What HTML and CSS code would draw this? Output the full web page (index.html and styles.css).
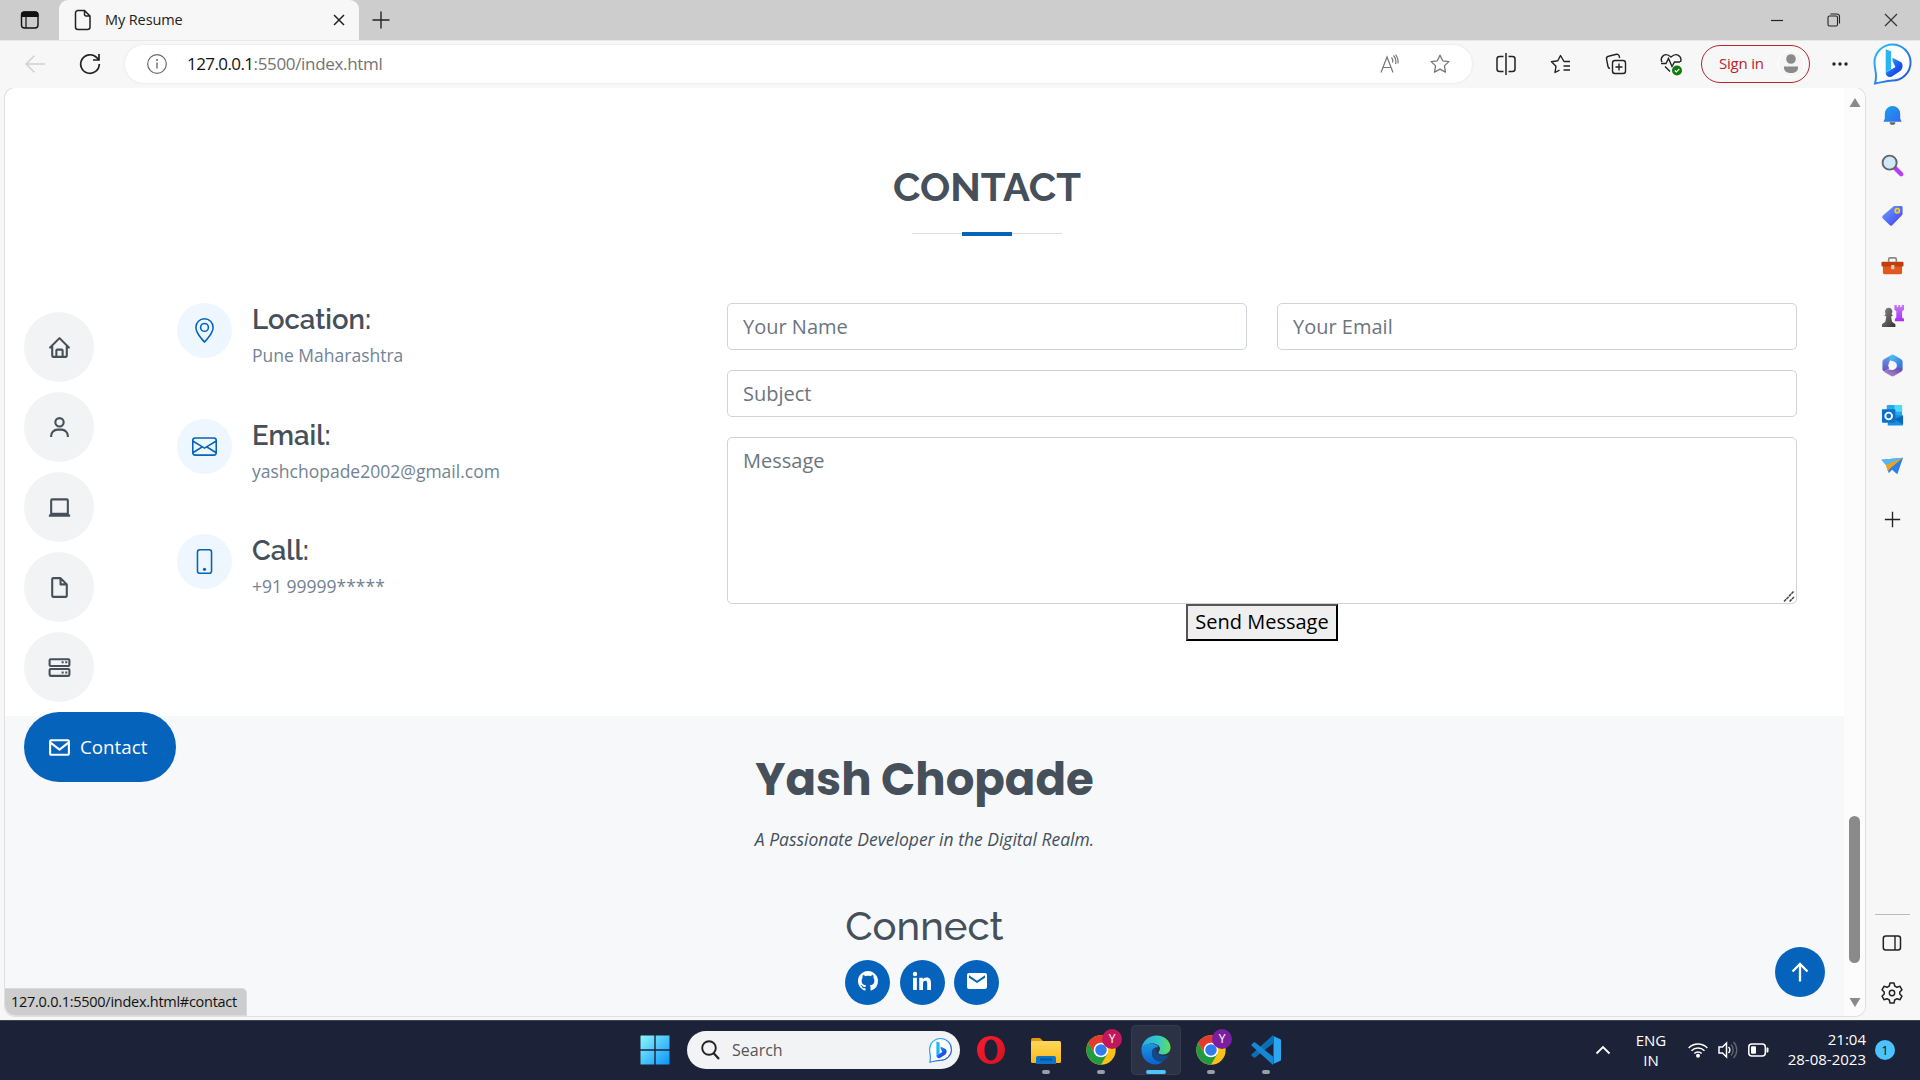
FILE: index.html
```html
<!DOCTYPE html>
<html lang="en">
<head>
<meta charset="utf-8">
<title>My Resume</title>
<link rel="stylesheet" href="styles.css">
</head>
<body>
<svg class="defs" width="0" height="0" aria-hidden="true">
  <defs>
    <linearGradient id="gBing" x1="0" y1="0" x2="1" y2="1"><stop offset="0" stop-color="#25c5f5"/><stop offset=".5" stop-color="#2b86ee"/><stop offset="1" stop-color="#1c4fd6"/></linearGradient>
    <linearGradient id="gB" x1="0" y1="0" x2="1" y2="1"><stop offset="0" stop-color="#2fd0f5"/><stop offset=".45" stop-color="#1a6ff0"/><stop offset=".7" stop-color="#1b48ef"/><stop offset="1" stop-color="#4fd8f0"/></linearGradient>
    <linearGradient id="gWin" x1="0" y1="0" x2="1" y2="1"><stop offset="0" stop-color="#8df6fb"/><stop offset="1" stop-color="#0a94fa"/></linearGradient>
    <linearGradient id="gBell" x1="0" y1="0" x2="1" y2="1"><stop offset="0" stop-color="#1aa4e6"/><stop offset="1" stop-color="#3466f5"/></linearGradient>
    <linearGradient id="gTag" x1="0" y1="0" x2="1" y2="1"><stop offset="0" stop-color="#6aa6fb"/><stop offset="1" stop-color="#4338f2"/></linearGradient>
    <linearGradient id="gPurple" x1="0" y1="0" x2="0" y2="1"><stop offset="0" stop-color="#c878fb"/><stop offset="1" stop-color="#a52ef5"/></linearGradient>
    <linearGradient id="gPawn" x1="0" y1="0" x2="1" y2="1"><stop offset="0" stop-color="#8a8a8a"/><stop offset="1" stop-color="#333"/></linearGradient>
    <linearGradient id="gFolder" x1="0" y1="0" x2="0" y2="1"><stop offset="0" stop-color="#ffd75e"/><stop offset="1" stop-color="#f9b915"/></linearGradient>
    <linearGradient id="gEdgeTop" x1="0" y1="0" x2="1" y2="0"><stop offset="0" stop-color="#2ba9ea"/><stop offset=".6" stop-color="#35c9c8"/><stop offset="1" stop-color="#62e04c"/></linearGradient>
    <linearGradient id="gEdge" x1="0" y1="0" x2="0" y2="1"><stop offset="0" stop-color="#1c97df"/><stop offset="1" stop-color="#0b62cf"/></linearGradient>
    <linearGradient id="gOpera" x1="0" y1="0" x2="1" y2="1"><stop offset="0" stop-color="#ff1b2d"/><stop offset="1" stop-color="#d01323"/></linearGradient>
    <linearGradient id="gM1" x1="0" y1="0" x2="0" y2="1"><stop offset="0" stop-color="#58a6f2"/><stop offset="1" stop-color="#6d4fc0"/></linearGradient>
    <linearGradient id="gM2" x1="0" y1="0" x2="1" y2="1"><stop offset="0" stop-color="#4ccbf0"/><stop offset="1" stop-color="#3a5ce0"/></linearGradient>
    <linearGradient id="gM3" x1="0" y1="1" x2="1" y2="0"><stop offset="0" stop-color="#b98ad0"/><stop offset="1" stop-color="#5a47b0"/></linearGradient>
    <symbol id="bing" viewBox="0 0 40 44">
      <path d="M2 42.5C5 33 1.5 29 1.5 21A18.5 18.5 0 1 1 20 39.500c-7 0-11 2-18 3z" fill="#fff" stroke="url(#gBing)" stroke-width="2"/>
      <path d="M13 7.500l5.500 2v18.500l-5.500 3.500z" fill="#27b5f3"/>
      <path d="M20 16l8.500 4.500c2.500 1.500 2.500 6.500 0 9L19 35.500c-3 1.500-6-1-6-4l10-6-3-6z" fill="url(#gB)"/>
    </symbol>
    <symbol id="chrome" viewBox="0 0 48 48">
      <circle cx="24" cy="24" r="23.500" fill="#fbc116"/>
      <path d="M3.650 12.250A23.500 23.500 0 0 1 44.350 12.250H24L14 30z" fill="#e33b2e"/>
      <path d="M3.650 12.250A23.500 23.500 0 0 0 24 47.500l10.200-17.600H13.800z" fill="#229a44"/>
      <circle cx="24" cy="24" r="11.700" fill="#fff"/><circle cx="24" cy="24" r="9.200" fill="#2f7bef"/>
    </symbol>
  </defs>
</svg>

<header class="titlebar">
  <div class="tab-actions">
    <svg width="20" height="20" viewBox="0 0 20 20"><rect x="1.500" y="2" width="16.500" height="16" rx="3" fill="none" stroke="#111" stroke-width="1.400"/><path d="M1 7V5a3 3 0 0 1 3-3.500h11.500a3 3 0 0 1 3 3.500v2z" fill="#111"/><path d="M6 7v11" stroke="#111" stroke-width="1.200"/></svg>
  </div>
  <div class="tab">
    <svg width="18" height="22" viewBox="0 0 18 22"><path d="M4 1.500h6.500l5.500 5.500v11a2.500 2.500 0 0 1-2.500 2.500H4A2.500 2.500 0 0 1 1.500 18V4A2.500 2.500 0 0 1 4 1.500zM10.500 1.500V5.500A1.500 1.500 0 0 0 12 7h4" fill="none" stroke="#222" stroke-width="1.500"/></svg>
    <span class="tab-title">My Resume</span>
    <svg class="tab-close" width="12" height="12" viewBox="0 0 12 12"><path d="M1 1l10 10M11 1L1 11" stroke="#222" stroke-width="1.500"/></svg>
  </div>
  <svg class="new-tab" width="18" height="18" viewBox="0 0 18 18"><path d="M9 .5v17M.5 9h17" stroke="#222" stroke-width="1.400"/></svg>
  <div class="window-buttons">
    <svg width="14" height="14" viewBox="0 0 14 14"><path d="M1 7.500h12" stroke="#222" stroke-width="1.200"/></svg>
    <svg width="14" height="14" viewBox="0 0 14 14"><rect x="1" y="3" width="9.500" height="10" rx="1.500" fill="none" stroke="#222" stroke-width="1.100"/><path d="M3.500 1H10a2.500 2.500 0 0 1 2.500 2.500V10.500" fill="none" stroke="#222" stroke-width="1.100"/></svg>
    <svg width="14" height="14" viewBox="0 0 14 14"><path d="M1 1l12 12M13 1L1 13" stroke="#333" stroke-width="1.200"/></svg>
  </div>
</header>

<nav class="toolbar">
  <svg class="back" width="20" height="18" viewBox="0 0 20 18"><path d="M20 9H1M9.500.8L1 9l8.500 8.200" fill="none" stroke="#cfcfcf" stroke-width="1.500"/></svg>
  <svg class="reload" width="22" height="22" viewBox="0 0 22 22"><path d="M20.300 11a9.300 9.300 0 1 1-2.500-6.300L20 6.800M20 1v6h-6" fill="none" stroke="#222" stroke-width="1.700"/></svg>
  <div class="address">
    <svg width="20" height="20" viewBox="0 0 20 20"><circle cx="10" cy="10" r="9.300" fill="none" stroke="#6b6b6b" stroke-width="1.200"/><path d="M10 8.500v6" stroke="#6b6b6b" stroke-width="1.400"/><circle cx="10" cy="6" r="1" fill="#6b6b6b"/></svg>
    <span class="url"><span class="host">127.0.0.1</span>:5500/index.html</span>
    <svg class="read" width="20" height="20" viewBox="0 0 20 20"><path d="M1 18.500L7 3l6 15.500M3 13.500h8M11.500 3.500a5 5 0 0 1 1 5M13.500 1.500a9 9 0 0 1 2 8.500M15.500.5a12 12 0 0 1 2.500 9" fill="none" stroke="#777" stroke-width="1.200"/></svg>
    <svg width="20" height="20" viewBox="0 0 20 20"><path d="M10 1.200l2.700 5.600 6.200.8-4.500 4.300 1.100 6.200-5.500-3-5.500 3 1.100-6.200L1.100 7.600l6.200-.8z" fill="none" stroke="#777" stroke-width="1.300" stroke-linejoin="round"/></svg>
  </div>
  <div class="tools">
    <svg width="22" height="22" viewBox="0 0 22 22"><path d="M8.500 3.500h-4a2.500 2.500 0 0 0-2.500 2.500v10a2.500 2.500 0 0 0 2.500 2.500h4M13.500 3.500h4a2.500 2.500 0 0 1 2.500 2.500v10a2.500 2.500 0 0 1-2.500 2.500h-4M11 0v22" fill="none" stroke="#222" stroke-width="1.500"/></svg>
    <svg width="22" height="22" viewBox="0 0 22 22"><path d="M20 8.500h-6l-3.500-6-2.700 5.300-6.300.9 4.500 4.500-1 6.300 4.500-2.300M13.500 13H20M13.500 17H20" fill="none" stroke="#222" stroke-width="1.400" stroke-linejoin="round"/></svg>
    <svg width="22" height="22" viewBox="0 0 22 22"><rect x="7.500" y="7.500" width="13" height="13" rx="2.500" fill="none" stroke="#222" stroke-width="1.400"/><path d="M14 10.500v7M10.500 14h7M5 15.500A2.500 2.500 0 0 1 3 13.500L1.500 6A2.500 2.500 0 0 1 3.500 3.200L11.500 1.300A2.500 2.500 0 0 1 14.300 3.500L14.600 5" fill="none" stroke="#222" stroke-width="1.400"/></svg>
    <svg width="22" height="24" viewBox="0 0 22 24"><path d="M2 10C-.5 5 5-.5 11 5c6-5.500 11.500 0 9.500 5M1 11.500h5l2.500-5 3.500 8 2.500-4.500H20M5 14.500l5 5" fill="none" stroke="#222" stroke-width="1.400"/><circle cx="17" cy="18.500" r="5" fill="#107c10"/><path d="M14.800 18.500l1.500 1.500 3-3" fill="none" stroke="#fff" stroke-width="1.100"/></svg>
  </div>
  <div class="signin"><span>Sign in</span>
    <svg width="28" height="28" viewBox="0 0 28 28"><circle cx="14" cy="14" r="13.300" fill="#f5f5f5" stroke="#fff"/><circle cx="14" cy="9" r="4.800" fill="#8a8a8a"/><path d="M7 16.500h14v1.500c0 3-3 5-7 5s-7-2-7-5z" fill="#8a8a8a"/></svg>
  </div>
  <svg class="more" width="16" height="4" viewBox="0 0 16 4"><g fill="#222"><circle cx="2" cy="2" r="1.700"/><circle cx="8" cy="2" r="1.700"/><circle cx="14" cy="2" r="1.700"/></g></svg>
  <svg class="bing-top" width="39" height="43"><use href="#bing"/></svg>
</nav>

<div class="workspace">
  <main class="viewport">
    <div class="page">
      <section class="contact">
        <h2 class="section-title">Contact</h2>
        <div class="title-rule"><i></i></div>
        <div class="contact-grid">
          <div class="info">
            <article>
              <div class="info-icon"><svg width="25" height="25" viewBox="0 0 16 16"><path d="M12.166 8.940c-.524 1.062-1.234 2.120-1.960 3.070A31.493 31.493 0 0 1 8 14.580a31.481 31.481 0 0 1-2.206-2.570c-.726-.950-1.436-2.008-1.960-3.070C3.304 7.867 3 6.862 3 6a5 5 0 0 1 10 0c0 .862-.305 1.867-.834 2.940zM8 16s6-5.686 6-10A6 6 0 0 0 2 6c0 4.314 6 10 6 10z"/><path d="M8 8a2 2 0 1 1 0-4 2 2 0 0 1 0 4zm0 1a3 3 0 1 0 0-6 3 3 0 0 0 0 6z"/></svg></div>
              <div><h4>Location:</h4><p>Pune Maharashtra</p></div>
            </article>
            <article>
              <div class="info-icon"><svg width="25" height="25" viewBox="0 0 16 16"><path d="M0 4a2 2 0 0 1 2-2h12a2 2 0 0 1 2 2v8a2 2 0 0 1-2 2H2a2 2 0 0 1-2-2V4Zm2-1a1 1 0 0 0-1 1v.217l7 4.200 7-4.200V4a1 1 0 0 0-1-1H2Zm13 2.383-4.708 2.825L15 11.105V5.383Zm-.034 6.876-5.640-3.471L8 9.583l-1.326-.795-5.640 3.470A1 1 0 0 0 2 13h12a1 1 0 0 0 .966-.741ZM1 11.105l4.708-2.897L1 5.383v5.722Z"/></svg></div>
              <div><h4>Email:</h4><p>yashchopade2002@gmail.com</p></div>
            </article>
            <article>
              <div class="info-icon"><svg width="25" height="25" viewBox="0 0 16 16"><path d="M11 1a1 1 0 0 1 1 1v12a1 1 0 0 1-1 1H5a1 1 0 0 1-1-1V2a1 1 0 0 1 1-1h6zM5 0a2 2 0 0 0-2 2v12a2 2 0 0 0 2 2h6a2 2 0 0 0 2-2V2a2 2 0 0 0-2-2H5z"/><path d="M8 14a1 1 0 1 0 0-2 1 1 0 0 0 0 2z"/></svg></div>
              <div><h4>Call:</h4><p>+91 99999*****</p></div>
            </article>
          </div>
          <form class="form">
            <div class="field-row"><div class="field">Your Name</div><div class="field">Your Email</div></div>
            <div class="field">Subject</div>
            <div class="field message">Message
              <svg class="grip" width="12" height="12" viewBox="0 0 12 12"><path d="M1 11.500L11 1M6.500 11.500L11 7" stroke="#444" stroke-width="1.500" stroke-dasharray="3 .6"/></svg>
            </div>
            <div class="send">Send Message</div>
          </form>
        </div>
      </section>
      <footer class="footer">
        <h3 class="name">Yash Chopade</h3>
        <p class="tagline">A Passionate Developer in the Digital Realm.</p>
        <h2 class="connect">Connect</h2>
        <div class="social">
          <a><svg width="20" height="20" viewBox="0 0 16 16"><path d="M8 0C3.580 0 0 3.580 0 8c0 3.540 2.290 6.530 5.470 7.590.4.070.550-.170.550-.380 0-.190-.010-.820-.010-1.490-2.010.370-2.530-.490-2.690-.940-.090-.230-.480-.940-.820-1.130-.280-.150-.680-.520-.010-.530.630-.010 1.080.580 1.230.820.720 1.210 1.870.870 2.330.660.070-.520.280-.870.510-1.070-1.780-.2-3.640-.890-3.640-3.950 0-.870.310-1.590.820-2.150-.080-.2-.360-1.020.080-2.120 0 0 .670-.210 2.200.820.640-.180 1.320-.270 2-.270.680 0 1.360.090 2 .270 1.530-1.040 2.200-.820 2.200-.820.440 1.100.160 1.920.080 2.120.510.560.820 1.270.820 2.150 0 3.070-1.870 3.750-3.650 3.950.290.250.540.730.540 1.480 0 1.070-.010 1.930-.010 2.200 0 .210.150.460.550.380A8.012 8.012 0 0 0 16 8c0-4.420-3.580-8-8-8z"/></svg></a>
          <a><svg width="24" height="24" viewBox="0 0 24 24"><path d="M4.983 7.197a2.188 2.188 0 1 0 0-4.376 2.188 2.188 0 0 0 0 4.376zm4.254 1.656v12.139h3.769v-6.003c0-1.584.298-3.118 2.262-3.118 1.937 0 1.961 1.811 1.961 3.218v5.904H21v-6.657c0-3.270-.704-5.783-4.526-5.783-1.835 0-3.065 1.007-3.568 1.960h-.051v-1.660H9.237zm-6.142 0H6.870v12.139H3.095z"/></svg></a>
          <a><svg width="24" height="24" viewBox="0 0 24 24"><path d="M20 4H4c-1.103 0-2 .897-2 2v12c0 1.103.897 2 2 2h16c1.103 0 2-.897 2-2V6c0-1.103-.897-2-2-2zm0 4.700l-8 5.334L4 8.700V6.297l8 5.333 8-5.333V8.700z"/></svg></a>
        </div>
      </footer>
    </div>
    <div class="scrollbar">
      <svg width="12" height="9" viewBox="0 0 12 9"><path d="M6 0l5.500 9H.5z" fill="#8a8a8a"/></svg>
      <span class="thumb"></span>
      <svg width="12" height="9" viewBox="0 0 12 9"><path d="M6 9l5.500-9H.5z" fill="#8a8a8a"/></svg>
    </div>

    <nav class="side-nav">
      <a><svg viewBox="0 0 24 24"><path d="M3 13h1v7c0 1.103.897 2 2 2h12c1.103 0 2-.897 2-2v-7h1a1 1 0 0 0 .707-1.707l-9-9a.999.999 0 0 0-1.414 0l-9 9A1 1 0 0 0 3 13zm7 7v-5h4v5h-4zm2-15.586 6 6V15l.001 5H16v-5c0-1.103-.897-2-2-2h-4c-1.103 0-2 .897-2 2v5H6v-9.586l6-6z"/></svg></a>
      <a><svg viewBox="0 0 24 24"><path d="M12 2a5 5 0 1 0 5 5 5 5 0 0 0-5-5zm0 8a3 3 0 1 1 3-3 3 3 0 0 1-3 3zm9 11v-1a7 7 0 0 0-7-7h-4a7 7 0 0 0-7 7v1h2v-1a5 5 0 0 1 5-5h4a5 5 0 0 1 5 5v1z"/></svg></a>
      <a><svg viewBox="0 0 24 24"><path fill-rule="evenodd" d="M5 3.200h14a2 2 0 0 1 2 2V18.800h1.200v2H1.800v-2H3V5.200a2 2 0 0 1 2-2zM5 5.200v11.800h14V5.200z"/></svg></a>
      <a><svg viewBox="0 0 24 24"><path d="M19.937 8.680c-.011-.032-.020-.063-.033-.094a.997.997 0 0 0-.196-.293l-6-6a.997.997 0 0 0-.293-.196c-.030-.014-.062-.022-.094-.033a.991.991 0 0 0-.259-.051C13.040 2.011 13.021 2 13 2H6c-1.103 0-2 .897-2 2v16c0 1.103.897 2 2 2h12c1.103 0 2-.897 2-2V9c0-.021-.011-.040-.013-.062a.990.990 0 0 0-.050-.258zM16.586 8H14V5.414L16.586 8zM6 20V4h6v5a1 1 0 0 0 1 1h5l.002 10H6z"/></svg></a>
      <a><svg viewBox="0 0 24 24"><g fill="none" stroke="#45505b" stroke-width="2"><rect x="2.500" y="4" width="19" height="6.500" rx="1"/><rect x="2.500" y="13.500" width="19" height="6.500" rx="1"/></g><path d="M14 6h2v2h-2zM17.500 6h2v2h-2zM14 15.800h2v2h-2zM17.500 15.800h2v2h-2z"/></svg></a>
      <a class="active"><svg viewBox="0 0 24 24"><path d="M20 4H4c-1.103 0-2 .897-2 2v12c0 1.103.897 2 2 2h16c1.103 0 2-.897 2-2V6c0-1.103-.897-2-2-2zm0 2v.511l-8 6.223-8-6.222V6h16zM4 18V9.044l7.386 5.745a.994.994 0 0 0 1.228 0L20 9.044 20.002 18H4z"/></svg><span class="nav-label">Contact</span></a>
    </nav>
    <div class="to-top"><svg width="18" height="20" viewBox="0 0 18 20"><path d="M9 19.500V2.500M1.500 9.500L9 2l7.500 7.500" fill="none" stroke="#fff" stroke-width="2.300"/></svg></div>
    <div class="status"><span>127.0.0.1:5500/index.html#contact</span></div>
  </main>

  <aside class="edge-bar">
    <div class="edge-apps">
      <svg viewBox="0 0 24 24"><path d="M12 2a8 8 0 0 1 8 8v5l1.500 3.500h-19L4 15v-5a8 8 0 0 1 8-8z" fill="url(#gBell)"/><path d="M9 19h6a3 2.700 0 0 1-6 0z" fill="#666"/></svg>
      <svg viewBox="0 0 24 24"><path d="M15 15l6 6" stroke="#b63df6" stroke-width="4.500" stroke-linecap="round"/><circle cx="9" cy="9" r="7.300" fill="#cfe9fb" stroke="#666" stroke-width="2"/></svg>
      <svg viewBox="0 0 24 24"><path d="M13.500 2H21a1.500 1.500 0 0 1 1.500 1.500V11L12 22a2 2 0 0 1-3 0l-7-7a2 2 0 0 1 0-3z" fill="url(#gTag)"/><circle cx="17" cy="7" r="2.300" fill="#7c8be8" stroke="#fbd216" stroke-width="1.600"/></svg>
      <svg viewBox="0 0 24 24"><path d="M8 8V5.500A1.500 1.500 0 0 1 9.500 4h5A1.500 1.500 0 0 1 16 5.500V8" fill="none" stroke="#888" stroke-width="1.700"/><rect x="2" y="10" width="20" height="11" rx="1.500" fill="#e2571c"/><rect x=".5" y="8" width="23" height="5" rx="1" fill="#c13d0b"/><rect x="10.500" y="11.500" width="3.500" height="4.500" rx=".5" fill="#ccc"/></svg>
      <svg viewBox="0 0 24 24"><path d="M14 1h2.500v2H18V1h2v2h1.500V1H24v5l-2 1.500V14l2 1.500V18h-9.500v-2.500l1.500-1.500V7.500L14 6z" fill="url(#gPurple)"/><path d="M8 4a4 4 0 0 1 3 6.500l1.500 1.500-2 1 1 5.500 3.500 2.500V24H1v-3l3.500-2.500 1-5.500-2-1L5 10.500A4 4 0 0 1 8 4z" fill="url(#gPawn)"/></svg>
      <svg viewBox="0 0 24 24"><path d="M11 1L3 5.500A3 3 0 0 0 1.500 8v8c0 1.500 1.500 2.500 3 1.500l4-2.500V9z" fill="url(#gM1)"/><path d="M10 1.500a3 3 0 0 1 3.500-.5L21 5.500A3 3 0 0 1 22.500 8v7c0 2-1.500 3-3 2.500L16 14V10l-4-2.500-3-1z" fill="url(#gM2)"/><path d="M3 18.500L7 16l5 .8 4-2.800 6.500 1.500A3 3 0 0 1 21 18.500L13.500 23a3 3 0 0 1-3 0z" fill="url(#gM3)"/><circle cx="12" cy="12" r="4.400" fill="#f7f7f7"/></svg>
      <svg viewBox="0 0 24 24"><rect x="6" y="1" width="16" height="13" rx="1" fill="#28a8ea"/><path d="M14 1h7a1 1 0 0 1 1 1v6h-8z" fill="#50d9ff"/><path d="M7 11l16 1v9.500a1 1 0 0 1-1 1H7z" fill="#1490df"/><path d="M23 12v9.500L14 16z" fill="#0c66b8"/><rect x="1" y="5.500" width="14" height="14" rx="1" fill="#0a70cb"/><circle cx="8" cy="12.500" r="3.500" fill="none" stroke="#fff" stroke-width="2"/></svg>
      <svg viewBox="0 0 24 24"><path d="M.5 6L23 4l-6 17-5.500-4.500L8 20l-1.500-7z" fill="#2a7fe8"/><path d="M.5 6L23 4 6 12z" fill="#56b7f7"/><path d="M23 4L5 11.500l2 6.500 3-3.500z" fill="#f0a11e"/></svg>
      <svg viewBox="0 0 24 24"><path d="M12 4v16M4 12h16" stroke="#222" stroke-width="1.400"/></svg>
    </div>
    <div class="edge-tools">
      <svg width="20" height="18" viewBox="0 0 20 18"><rect x="1.300" y="2" width="17.200" height="14" rx="2.500" fill="none" stroke="#222" stroke-width="1.500"/><path d="M13 2v14" stroke="#222" stroke-width="1.400"/></svg>
      <svg width="24" height="24" viewBox="0 0 24 24"><path d="M10 2h4l.7 3 2.300 1.300 3-1 2 3.500L19.800 11v2l2.200 2.200-2 3.500-3-1-2.300 1.300-.7 3h-4l-.7-3L7 17.700l-3 1-2-3.500L4.200 13v-2L2 8.800l2-3.500 3 1L9.300 5z" fill="none" stroke="#222" stroke-width="1.500" stroke-linejoin="round"/><circle cx="12" cy="12" r="2.700" fill="none" stroke="#222" stroke-width="1.400"/></svg>
    </div>
  </aside>
</div>

<footer class="taskbar">
  <div class="start"><svg width="30" height="30" viewBox="0 0 30 30"><path d="M1 .5h13.300v13.800H.5V1zM15.700.5H29.500v13.800H15.700zM.5 15.700h13.800v13.800H.5zM15.700 15.700h13.800v13.800H15.700z" fill="url(#gWin)"/></svg></div>
  <div class="search">
    <svg width="19" height="20" viewBox="0 0 19 20"><circle cx="8" cy="8" r="6.800" fill="none" stroke="#222" stroke-width="1.900"/><path d="M12.500 13l5.500 6" stroke="#222" stroke-width="2.200"/></svg>
    <span>Search</span>
    <svg class="search-bing" width="25" height="26"><use href="#bing"/></svg>
  </div>
  <div class="apps">
    <div class="app"><svg width="30" height="30" viewBox="0 0 30 30"><path fill-rule="evenodd" d="M15 1c8 0 14 6 14 14s-6 14-14 14S1 23 1 15 7 1 15 1zm0 3.500c-4 0-6.500 4.500-6.500 10.500s2.500 10.500 6.500 10.500 6.500-4.500 6.500-10.500S19 4.500 15 4.500z" fill="url(#gOpera)"/></svg></div>
    <div class="app run"><svg width="30" height="30" viewBox="0 0 30 30"><path d="M0 5a2 2 0 0 1 2-2h7l4 4v5H0z" fill="#e09b07"/><rect y="6" width="30" height="22" rx="1.500" fill="url(#gFolder)"/><path d="M5 29v-6a2 2 0 0 1 2-2h16a2 2 0 0 1 2 2v6z" fill="#0a74c9"/><path d="M9 24.500h12" stroke="#06539b" stroke-width="2"/></svg></div>
    <div class="app run"><svg width="30" height="30"><use href="#chrome"/></svg><b class="pink">Y</b></div>
    <div class="app run current"><svg width="30" height="30" viewBox="0 0 30 30"><path d="M.5 13C2 5.500 8 .5 15.500.5 24 .5 29.500 6.500 29.500 12.500c0 4-3 7-7.500 7-3 0-4.500-1-4.500-2s1.500-1.500 1.500-4S16 8.500 11 8.500 1.500 11 .5 13z" fill="url(#gEdgeTop)"/><path d="M.5 13C3 8 15 7 17.500 12c-6 .5-7 4-6.500 7.500.7 5 6 8 11 6.500-2 2.500-5 3.500-7.500 3.500C6 29.500-.5 22 .5 13z" fill="url(#gEdge)"/><path d="M11 19c-.5-3.500 1.500-6 4-6.500-1 3 1 8.500 8 8.500 2.500 0 4-1 5-1.500-1 3-3.500 5.500-6 6.500-5 1.500-10.500-2-11-7z" fill="#114a8b"/></svg></div>
    <div class="app run"><svg width="30" height="30"><use href="#chrome"/></svg><b class="violet">Y</b></div>
    <div class="app run"><svg width="30" height="30" viewBox="0 0 30 30"><path d="M22 0L.7 19.200a1 1 0 0 0 0 1.500l2 1.800c.5.400 1 .4 1.500 0L22 8.500z" fill="#0a70b5"/><path d="M22 30L.7 10.800a1 1 0 0 1 0-1.500l2-1.800c.5-.4 1-.4 1.500 0L22 21.500z" fill="#1687d4"/><path d="M21 .5l8 3.500a1.500 1.500 0 0 1 1 1.500v19a1.500 1.500 0 0 1-1 1.500l-8 3.500c1 0 1.500-1 1.500-2V2.500c0-1-.5-2-1.500-2z" fill="#2ba6f1"/></svg></div>
  </div>
  <div class="tray">
    <svg class="caret" width="16" height="10" viewBox="0 0 16 10"><path d="M1.500 8.500L8 2l6.500 6.500" fill="none" stroke="#fff" stroke-width="1.800"/></svg>
    <div class="lang"><span>ENG</span><span>IN</span></div>
    <svg width="20" height="16" viewBox="0 0 20 16"><g fill="none" stroke="#fff" stroke-width="1.500"><path d="M.7 6a13 13 0 0 1 18.600 0M3.500 8.800a9.200 9.200 0 0 1 13 0M6.300 11.500a5.200 5.200 0 0 1 7.400 0"/></g><circle cx="10" cy="13.700" r="2" fill="#fff"/></svg>
    <svg width="20" height="18" viewBox="0 0 20 18"><path d="M1 6h3.500L8.500 2v14L4.500 12H1zM10.500 6a4 4 0 0 1 0 6" fill="none" stroke="#fff" stroke-width="1.500"/><path d="M13 3.500a8 8 0 0 1 0 11M15.500 1a11.500 11.500 0 0 1 0 16" fill="none" stroke="#667" stroke-width="1.300"/></svg>
    <svg width="21" height="14" viewBox="0 0 21 14"><rect x=".8" y="1" width="16.500" height="12" rx="3" fill="none" stroke="#fff" stroke-width="1.500"/><rect x="3" y="3.300" width="5" height="7.500" rx="1" fill="#fff"/><path d="M18.500 4.500h1a1 1 0 0 1 1 1v3a1 1 0 0 1-1 1h-1z" fill="#fff"/></svg>
    <div class="clock"><span>21:04</span><span>28-08-2023</span></div>
    <div class="notif">1</div>
  </div>
</footer>
</body>
</html>
```
FILE: styles.css
```css
* { box-sizing: border-box; }
body {
  margin: 0; width: 1920px; height: 1080px; overflow: hidden;
  display: grid; grid-template-rows: 40px 48px 933px 59px;
  font-family: "Open Sans", "Noto Sans", sans-serif; color: #222; background: #f7f7f7;
}
h2, h3, h4, p { margin: 0; }
svg { display: block; flex: none; }
.defs { position: absolute; }

/* browser window */
.titlebar { display: flex; align-items: center; background: #cdcdcd; }
.tab-actions { width: 59px; height: 40px; display: flex; align-items: center; padding-left: 20px; border-radius: 0 0 6px 0; }
.tab { width: 300px; height: 40px; background: #f7f7f7; border-radius: 9px 9px 0 0; display: flex; align-items: center; padding: 0 14px 0 15px; }
.tab-title { margin-left: 13px; font-size: 14.500px; letter-spacing: -.1px; padding-bottom: 2px; }
.tab-close { margin-left: auto; }
.new-tab { margin-left: 13px; }
.window-buttons { margin-left: auto; display: flex; gap: 43px; padding-right: 22px; }
.toolbar { display: flex; align-items: center; border-top: 1px solid #e8e8e8; background: #f7f7f7; padding-bottom: 2px; }
.back { margin-left: 25px; }
.reload { margin-left: 34px; }
.address { margin-left: 24px; width: 1347px; height: 38px; border-radius: 19px; background: #fff; box-shadow: 0 0 3px #e3e3e3; display: flex; align-items: center; padding: 0 22px; }
.url { margin-left: 20px; font-size: 17px; color: #737373; letter-spacing: -.33px; }
.host { color: #111; letter-spacing: -.58px; }
.read { margin-left: auto; margin-right: 30px; }
.tools { display: flex; align-items: center; gap: 33px; margin-left: 23px; }
.signin { margin-left: 19px; width: 109px; height: 38px; border: 1.500px solid #b3262b; border-radius: 19px; display: flex; align-items: center; justify-content: space-between; padding: 0 4px 0 17px; font-size: 15px; color: #b3262b; letter-spacing: -.2px; }
.signin span { padding-bottom: 1px; }
.more { margin-left: 22px; }
.bing-top { margin-left: 25px; }

.workspace { display: flex; padding: 0 0 4px 5px; border-bottom: 1px solid #3c4450; overflow: hidden; }
.viewport { position: relative; width: 1860px; height: 928px; display: flex; background: #fff; border-radius: 10px; overflow: hidden; box-shadow: 0 0 0 1px #e0e0e0; }
.page { width: 1839px; display: flex; flex-direction: column; }
.contact { height: 628px; padding: 75px 47px 0 172px; }
.section-title { font: 700 40px/48px Raleway, Lato, sans-serif; text-transform: uppercase; text-align: center; color: #45505b; }
.title-rule { width: 150px; height: 4px; margin: 21px 0 0 735px; display: flex; justify-content: center; background: linear-gradient(#ddd, #ddd) 0 1px / 100% 1px no-repeat; }
.title-rule i { width: 50px; background: #0563bb; }
.contact-grid { display: flex; margin-top: 67px; }
.info { width: 550px; display: flex; flex-direction: column; }
.info article { display: flex; gap: 20px; height: 115.500px; }
.info-icon { width: 55px; height: 55px; border-radius: 50%; background: #eef7ff; display: grid; place-items: center; fill: #0563bb; }
.info h4 { font: 600 27.500px/33px Raleway, Lato, sans-serif; color: #45505b; }
.info p { font-size: 17.500px; line-height: 26px; margin-top: 6px; color: #728394; }
.form { width: 1070px; display: flex; flex-direction: column; gap: 20px; }
.field-row { display: grid; grid-template-columns: 1fr 1fr; gap: 30px; }
.field { height: 47px; border: 1px solid #ced4da; border-radius: 5px; padding: 8px 15px; font-size: 20px; line-height: 30px; color: #6c757d; background: #fff; }
.message { height: 167px; position: relative; }
.grip { position: absolute; right: 1px; bottom: 1px; }
.send { align-self: center; margin-top: -20px; width: 152px; height: 37px; border: 2px solid; border-color: #555 #000 #000 #555; background: #efefef; color: #000; font-size: 20px; line-height: 32px; text-align: center; white-space: nowrap; }
.footer { flex: 1; background: #f7f8fa; color: #45505b; display: flex; flex-direction: column; align-items: center; padding-top: 37px; }
.name { font: 700 45px/54px Poppins, Inter, sans-serif; }
.tagline { font-size: 17.500px; line-height: 26px; font-style: italic; margin-top: 19px; white-space: nowrap; }
.connect { font: 500 40px/48px Raleway, Lato, sans-serif; margin-top: 50px; }
.social { display: flex; gap: 9.500px; margin-top: 10px; margin-right: 5px; }
.social a { width: 45px; height: 45px; border-radius: 50%; background: #0563bb; fill: #fff; display: grid; place-items: center; padding-bottom: 3px; }
.scrollbar { width: 21px; background: #fcfcfc; display: flex; flex-direction: column; align-items: center; padding: 10px 0 9px; }
.thumb { width: 11px; height: 147px; border-radius: 6px; background: #8a8a8a; margin: auto 0 35px; }

/* floating page controls */
.side-nav { position: absolute; left: 19px; top: 224px; display: flex; flex-direction: column; gap: 10px; align-items: flex-start; }
.side-nav a { height: 70px; min-width: 70px; border-radius: 35px; background: #f2f3f5; display: flex; align-items: center; padding: 0 0 0 22.500px; fill: #45505b; }
.side-nav svg { width: 25px; height: 25px; }
.side-nav .active { width: 152px; background: #0563bb; fill: #fff; color: #fff; }
.nav-label { margin-left: 8.500px; font-size: 18.750px; padding-bottom: 2px; }
.to-top { position: absolute; left: 1770px; top: 859px; width: 50px; height: 50px; border-radius: 50%; background: #0563bb; display: grid; place-items: center; }
.status { position: absolute; left: 0; bottom: 0; width: 242px; height: 28px; background: #cdcdcd; border: 1px solid #d9dadb; border-left: 0; border-radius: 0 5px 0 10px; padding-left: 6px; font-size: 14.500px; line-height: 26px; letter-spacing: -.27px; color: #111; white-space: nowrap; }

.edge-bar { width: 54px; display: flex; flex-direction: column; align-items: center; }
.edge-apps { display: grid; grid-auto-rows: 50.100px; justify-items: center; align-items: center; padding-top: 2px; }
.edge-apps svg { width: 23px; height: 23px; }
.edge-apps svg:last-child { margin-top: 7px; }
.edge-tools { margin-top: 373px; border-top: 1px solid #bbb; width: 35px; display: flex; flex-direction: column; align-items: center; gap: 29px; padding-top: 19px; }

/* desktop taskbar */
.taskbar { display: flex; align-items: center; background: #1c2237; color: #fff; padding-bottom: 1px; }
.start { margin-left: 630px; width: 50px; display: grid; place-items: center; }
.search { margin-left: 7px; width: 273px; height: 38px; border-radius: 19px; background: #f2f3f5; color: #555; display: flex; align-items: center; padding: 0 7px 0 14px; font-size: 16px; }
.search span { margin-left: 12px; }
.search-bing { margin-left: auto; }
.apps { margin-left: 6px; display: flex; gap: 5px; }
.app { position: relative; width: 50px; height: 50px; display: grid; place-items: center; border-radius: 5px; }
.app b { position: absolute; left: 26px; top: 4px; width: 20px; height: 20px; border-radius: 50%; font-size: 12px; font-weight: 400; line-height: 20px; text-align: center; }
.pink { background: #c2185b; }
.violet { background: #7b1fa2; }
.run::after { content: ""; position: absolute; left: 21px; bottom: 1px; width: 8px; height: 4px; border-radius: 2px; background: #9a9da8; }
.current { background: #2c3246; box-shadow: inset 0 0 0 1px #363c4f; }
.current::after { left: 15px; width: 20px; background: #4cc2ff; }
.tray { margin-left: auto; padding-right: 25px; display: flex; align-items: center; gap: 10px; font-size: 15px; line-height: 20px; }
.caret { margin-right: 15px; }
.lang { display: flex; flex-direction: column; align-items: center; margin-right: 12px; width: 30px; padding-bottom: 1px; }
.clock { display: flex; flex-direction: column; align-items: flex-end; margin-left: 9px; width: 78px; padding-bottom: 2px; white-space: nowrap; }
.notif { width: 20px; height: 20px; margin-left: -1px; border-radius: 50%; background: #4cc2ff; color: #111; font-size: 13px; text-align: center; }
```
